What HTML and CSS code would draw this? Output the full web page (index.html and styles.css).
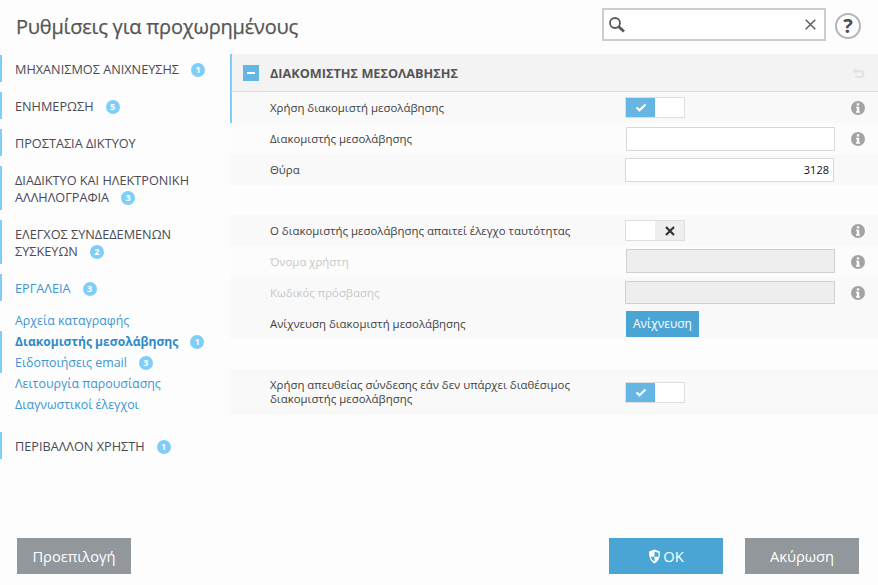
FILE: index.html
```html
<!DOCTYPE html>
<html>

<head>
	<title>Ρυθμίσεις για προχωρημένους</title>

	<link rel="stylesheet" href="styles.css">

</head>

<body>

	<!-- info icon, used in the rows below -->
	<svg class="defs" width="0" height="0">
		<symbol id="info" viewBox="0 0 14 14">
			<circle cx="7" cy="7" r="7" fill="#a3a3a3" />
			<rect x="5.800" y="2.300" width="2.400" height="2.200" fill="#fff" />
			<path d="M5 5.700h3.200v4.600H9v1.400H5v-1.400h.8V7.100H5z" fill="#fff" />
		</symbol>
	</svg>

	<div id="page">

		<div id="top">
			<h1>Ρυθμίσεις για προχωρημένους</h1>
			<div class="search">
				<svg width="18" height="18" viewBox="0 0 18 18">
					<circle cx="7" cy="7" r="5" fill="none" stroke="#5a5a5a" stroke-width="1.800" />
					<path d="M10.500 10.500l5.500 5" stroke="#5a5a5a" stroke-width="3" />
				</svg>
				<svg width="11" height="11" viewBox="0 0 11 11">
					<path d="M.7.7l9.600 9.600M10.300.7L.7 10.300" stroke="#5f5f5f" stroke-width="1.500" />
				</svg>
			</div>
			<div class="help">?</div>
		</div>

		<div id="main">

			<div id="menu">
				<a class="item">ΜΗΧΑΝΙΣΜΟΣ ΑΝΙΧΝΕΥΣΗΣ<span class="badge">1</span></a>
				<a class="item">ΕΝΗΜΕΡΩΣΗ<span class="badge">5</span></a>
				<a class="item">ΠΡΟΣΤΑΣΙΑ ΔΙΚΤΥΟΥ</a>
				<a class="item">ΔΙΑΔΙΚΤΥΟ ΚΑΙ ΗΛΕΚΤΡΟΝΙΚΗ ΑΛΛΗΛΟΓΡΑΦΙΑ<span class="badge">3</span></a>
				<a class="item">ΕΛΕΓΧΟΣ ΣΥΝΔΕΔΕΜΕΝΩΝ ΣΥΣΚΕΥΩΝ<span class="badge">2</span></a>
				<a class="item open">ΕΡΓΑΛΕΙΑ<span class="badge">3</span></a>

				<div class="sub">
					<a>Αρχεία καταγραφής</a>
					<div class="current">
						<a class="bold">Διακομιστής μεσολάβησης<span class="badge">1</span></a>
						<a>Ειδοποιήσεις email<span class="badge">3</span></a>
					</div>
					<a>Λειτουργία παρουσίασης</a>
					<a>Διαγνωστικοί έλεγχοι</a>
				</div>

				<a class="item">ΠΕΡΙΒΑΛΛΟΝ ΧΡΗΣΤΗ<span class="badge">1</span></a>
			</div>

			<div id="content">

				<div class="title">
					<span class="minus"></span>
					<b>ΔΙΑΚΟΜΙΣΤΗΣ ΜΕΣΟΛΑΒΗΣΗΣ</b>
					<svg width="14" height="14" viewBox="0 0 16 14">
						<path d="M6 1L1.500 4.500 6 8V6h5c1.300 0 2 .8 2 2s-.7 2-2 2H5v2.500h6.500C14 12.500 15.500 10.700 15.500 8.200S14 3.500 11.500 3.500H6z" fill="#e3e3e3" />
					</svg>
				</div>

				<div class="row dark first">
					<label>Χρήση διακομιστή μεσολάβησης</label>
					<div class="toggle on"><span><svg width="12" height="9" viewBox="0 0 12 9"><path d="M1.500 4.500L4.500 7.300 10.500 1.500" fill="none" stroke="#fff" stroke-width="2.200" /></svg></span><i></i></div>
					<svg class="info"><use href="#info" /></svg>
				</div>
				<div class="row">
					<label>Διακομιστής μεσολάβησης</label>
					<input class="field shift" type="text">
					<svg class="info"><use href="#info" /></svg>
				</div>
				<div class="row dark">
					<label>Θύρα</label>
					<input class="field" type="text" value="3128">
				</div>

				<div class="gap"></div>

				<div class="row dark">
					<label>Ο διακομιστής μεσολάβησης απαιτεί έλεγχο ταυτότητας</label>
					<div class="toggle off"><i></i><span><svg width="10" height="10" viewBox="0 0 10 10"><path d="M1 1l8 8M9 1L1 9" stroke="#333" stroke-width="2.200" /></svg></span></div>
					<svg class="info"><use href="#info" /></svg>
				</div>
				<div class="row">
					<label class="disabled">Όνομα χρήστη</label>
					<input class="field shift raised" type="text" disabled>
					<svg class="info"><use href="#info" /></svg>
				</div>
				<div class="row dark">
					<label class="disabled">Κωδικός πρόσβασης</label>
					<input class="field wide" type="text" disabled>
					<svg class="info"><use href="#info" /></svg>
				</div>
				<div class="row dark">
					<label>Ανίχνευση διακομιστή μεσολάβησης</label>
					<button class="detect">Ανίχνευση</button>
				</div>

				<div class="gap"></div>

				<div class="row dark tall">
					<label>Χρήση απευθείας σύνδεσης εάν δεν υπάρχει διαθέσιμος διακομιστής μεσολάβησης</label>
					<div class="toggle on"><span><svg width="12" height="9" viewBox="0 0 12 9"><path d="M1.500 4.500L4.500 7.300 10.500 1.500" fill="none" stroke="#fff" stroke-width="2.200" /></svg></span><i></i></div>
				</div>

			</div>
		</div>

		<div id="bottom">
			<button class="btn grey">Προεπιλογή</button>
			<div class="right">
				<button class="btn blue">
					<svg width="13" height="15" viewBox="0 0 13 15">
						<path d="M6.500.5L12 2.500c0 5-1 9.500-5.500 12C2 12 1 7.500 1 2.500z" fill="#fff" />
						<path d="M6.500 2.500v5.300H2.700c.3 1.800 1.300 3.400 3.800 4.700V7.800h3.800c.2-1.200.3-2.200.3-3.900z" fill="#4ba5d4" />
					</svg>OK</button>
				<button class="btn grey">Ακύρωση</button>
			</div>
		</div>

	</div>

</body>

</html>
```

FILE: styles.css
```css
* {
	box-sizing: border-box;
}

body {
	margin: 0;
	font-family: "Open Sans", "Noto Sans", sans-serif;
	background-color: #fdfdfd;
	color: #3f3f3f;
}

.defs {
	display: block;
}

#page {
	height: 585px;
	overflow: hidden;
	display: flex;
	flex-direction: column;
}

/* top bar */
#top {
	height: 54px;
	flex: none;
	display: flex;
	align-items: flex-start;
	padding: 8px 14px 0 16px;
}

h1 {
	margin: 5px auto 0 0;
	font-size: 20px;
	font-weight: 400;
	letter-spacing: -.2px;
	line-height: 28px;
	color: #555;
	-webkit-text-stroke: .25px #555;
}

.search {
	width: 224px;
	height: 33px;
	border: 2px solid #ccc;
	background-color: #fff;
	display: flex;
	align-items: center;
	justify-content: space-between;
	padding: 0 8px 0 4px;
}

.help {
	width: 26px;
	height: 26px;
	margin: 5px 3px 0 9px;
	border: 2px solid #b5b5b5;
	border-radius: 50%;
	font-size: 20px;
	font-weight: 700;
	line-height: 22px;
	text-align: center;
	color: #4d4d4d;
}

#main {
	flex: 1;
	display: grid;
	grid-template-columns: 230px 1fr;
	align-items: start;
}

/* left menu */
#menu {
	padding-top: 1px;
}

.item {
	display: block;
	border-left: 2px solid #7fcdf9;
	margin-bottom: 10px;
	padding: 6px 16px 4px 13px;
	font-size: 12.7px;
	line-height: 17px;
	color: #4a4a55;
}

.open {
	color: #3c95d3;
}

.badge {
	display: inline-block;
	width: 14px;
	height: 14px;
	margin-left: 12px;
	border-radius: 50%;
	background-color: #7fcdf9;
	color: #fff;
	font-size: 9px;
	font-weight: 700;
	line-height: 14px;
	text-align: center;
	vertical-align: 1px;
}

.sub {
	margin-top: -1px;
	margin-bottom: 17px;
}

.sub a {
	display: block;
	padding-left: 15px;
	height: 21px;
	font-size: 12.4px;
	line-height: 22px;
	color: #3c95d3;
}

.sub .current {
	border-left: 2px solid #7fcdf9;
}

.sub .current a {
	padding-left: 13px;
}

.sub .bold {
	font-size: 12.1px;
	font-weight: 700;
	color: #2d8ac8;
}

/* settings panel */
.title {
	height: 38px;
	background-color: #f3f3f3;
	border-left: 2px solid #7fcdf9;
	border-bottom: 1px solid #ddd;
	display: flex;
	align-items: center;
	padding: 0 13px 0 11px;
	font-size: 12.7px;
	color: #555;
}

.title b {
	margin-right: auto;
}

.minus {
	width: 16px;
	height: 16px;
	margin-right: 11px;
	background-color: #65b6e2;
	display: flex;
	align-items: center;
	justify-content: center;
}

.minus::before {
	content: "";
	width: 8px;
	height: 2px;
	background-color: #fff;
}

.row {
	height: 31px;
	display: flex;
	align-items: center;
	padding-left: 40px;
	background-color: #fcfcfc;
	font-size: 11.4px;
}

.dark {
	background-color: #f9f9f9;
}

.first {
	border-left: 2px solid #7fcdf9;
	padding-left: 38px;
}

.tall {
	height: 46px;
}

.gap {
	height: 30px;
}

label {
	width: 355px;
	flex: none;
	line-height: 14px;
}

.disabled {
	color: #c8c8c8;
}

.field {
	width: 209px;
	height: 24px;
	flex: none;
	border: 1px solid #d8d8d8;
	background-color: #fff;
	padding: 0 4px;
	text-align: right;
	font-family: inherit;
	font-size: 11px;
	color: #111;
}

.field:disabled {
	background-color: #eee;
	border-color: #d0d0d0;
}

.shift {
	margin-left: 1px;
}

.raised {
	margin-bottom: 2px;
}

.wide {
	width: 210px;
	height: 23px;
}

.toggle {
	width: 60px;
	height: 21px;
	flex: none;
	border: 1px solid #dedede;
	background-color: #fff;
	display: flex;
}

.toggle span {
	width: 29px;
	display: flex;
	align-items: center;
	justify-content: center;
}

.toggle i {
	flex: 1;
}

.on span {
	background-color: #65b6e2;
}

.off span {
	background-color: #eee;
}

.info {
	width: 14px;
	height: 14px;
	margin-left: auto;
	margin-right: 13px;
}

.detect {
	width: 73px;
	height: 26px;
	margin-left: 1px;
	border: 0;
	background-color: #4ba5d4;
	color: #fff;
	font-family: inherit;
	font-size: 12px;
	padding: 0;
}

/* bottom buttons */
#bottom {
	flex: none;
	height: 47px;
	display: flex;
	justify-content: space-between;
	align-items: flex-start;
	padding: 0 19px 0 17px;
}

.right {
	display: flex;
	gap: 22px;
}

.btn {
	width: 114px;
	height: 36px;
	border: 0;
	font-family: inherit;
	font-size: 14.7px;
	color: #fff;
	padding: 0;
}

.btn svg {
	vertical-align: -2px;
	margin-right: 2px;
}

.grey {
	background-color: #92979c;
}

.blue {
	background-color: #4ba5d4;
}
```
